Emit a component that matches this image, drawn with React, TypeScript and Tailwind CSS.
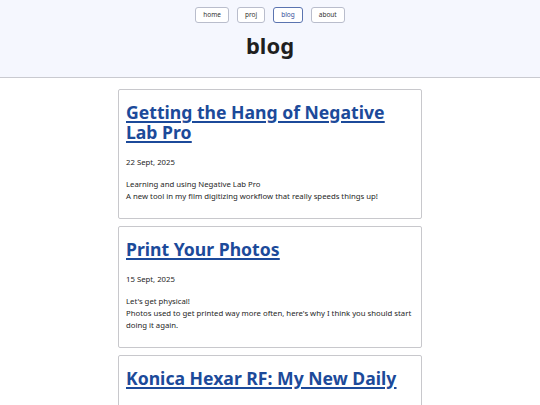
import React from 'react';

interface Post {
    title: string;
    date: string;
    lines: string[];
}

const posts: Post[] = [
    {
        title: 'Getting the Hang of Negative Lab Pro',
        date: '22 Sept, 2025',
        lines: ['Learning and using Negative Lab Pro', 'A new tool in my film digitizing workflow that really speeds things up!'],
    },
    {
        title: 'Print Your Photos',
        date: '15 Sept, 2025',
        lines: ["Let's get physical!", "Photos used to get printed way more often, here's why I think you should start doing it again."],
    },
    {
        title: 'Konica Hexar RF: My New Daily',
        date: '8 Sept, 2025',
        lines: ['A rangefinder that goes everywhere with me'],
    },
];

const navItems = ['home', 'proj', 'blog', 'about'];

const NavButton: React.FC<{ label: string; active: boolean }> = ({ label, active }) => (
    <a
        href="#"
        className={
            active
                ? 'h-4 px-[7px] flex items-center rounded-[3px] border border-[#5b74b0] bg-white text-[6.5px] text-[#34509a]'
                : 'h-4 px-[7px] flex items-center rounded-[3px] border border-[#b9bdcc] bg-white text-[6.5px] text-[#333]'
        }
    >
        {label}
    </a>
);

const PostCard: React.FC<{ post: Post }> = ({ post }) => (
    <article className="border border-[#c8c8cc] rounded-[2px] bg-white px-[7px] pt-[7px] pb-[7px]">
        <h2 className="mt-[5px] text-[17.6px] leading-[20px] font-bold text-[#1c4a9a] underline underline-offset-[2px] decoration-2">
            <a href="#">{post.title}</a>
        </h2>
        <p className="mt-[14px] text-[7.75px] leading-[12px] text-[#262626]">{post.date}</p>
        <div className="mt-[10px] mb-[9px] text-[7.75px] leading-[12px] text-[#262626]">
            {post.lines.map((l) => (
                <p key={l}>{l}</p>
            ))}
        </div>
    </article>
);

export default function App() {
    return (
        <div className="min-h-screen bg-white font-['Noto_Sans',sans-serif]">
            <header className="h-[78px] bg-[#f5f7fe] border-b border-[#c9cad0] pt-[7px]">
                <nav className="flex justify-center gap-2">
                    {navItems.map((n) => (
                        <NavButton key={n} label={n} active={n === 'blog'} />
                    ))}
                </nav>
                <h1 className="mt-[7px] text-center text-[22px] leading-[30px] font-bold text-[#1f1f1f]">blog</h1>
            </header>
            <main className="w-[304px] mx-auto mt-[11px] flex flex-col gap-[7px]">
                {posts.map((p) => (
                    <PostCard key={p.title} post={p} />
                ))}
            </main>
        </div>
    );
}
